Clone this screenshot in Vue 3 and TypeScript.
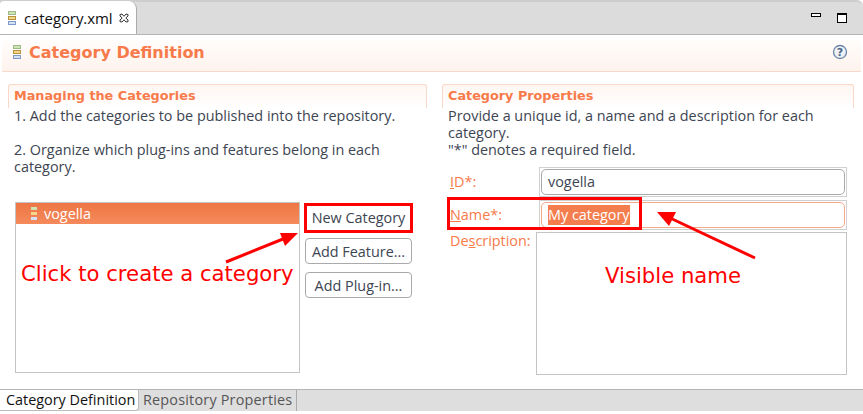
<script setup lang="ts">
const steps = ['1. Add the categories to be published into the repository.', '2. Organize which plug-ins and features belong in each category.']
</script>

<template>
  <div class="page">
    <div class="tabbar">
      <div class="tab">
        <svg class="cat" width="10" height="14" viewBox="0 0 10 14"><rect x="1.5" y="0.5" width="7" height="3" fill="#cfe3b5" stroke="#9bb98a"/><rect x="1.5" y="5.5" width="7" height="3" fill="#f3d68c" stroke="#b8923a"/><rect x="1.5" y="10.5" width="7" height="3" fill="#d5e1f3" stroke="#7d9ac9"/></svg>
        <span>category.xml</span>
        <svg class="close" width="10" height="10" viewBox="0 0 10 10"><path d="M1 1.5 3 1 5 3.3 7 1 9 1.5 9 3 6.8 5 9 7 9 8.7 7 9 5 6.8 3 9 1 8.7 1 7 3.2 5 1 3Z" fill="#fff" stroke="#333" stroke-width="1"/></svg>
      </div>
      <div class="winbtns">
        <span class="min"></span>
        <span class="max"></span>
      </div>
    </div>
    <div class="formhead">
      <svg class="cat" width="10" height="14" viewBox="0 0 10 14"><rect x="1.5" y="0.5" width="7" height="3" fill="#cfe3b5" stroke="#9bb98a"/><rect x="1.5" y="5.5" width="7" height="3" fill="#f3d68c" stroke="#b8923a"/><rect x="1.5" y="10.5" width="7" height="3" fill="#d5e1f3" stroke="#7d9ac9"/></svg>
      <h1>Category Definition</h1>
      <svg class="help" width="16" height="16" viewBox="0 0 16 16"><circle cx="8" cy="8" r="6.5" fill="#eef2f7" stroke="#6d84a6" stroke-width="1.3"/><text x="8" y="12" text-anchor="middle" font-size="11" font-weight="700" font-family="DejaVu Sans" fill="#4d6488">?</text></svg>
    </div>
    <div class="body">
      <section class="left">
        <h2>Managing the Categories</h2>
        <p class="first">{{ steps[0] }}</p>
        <p class="second">{{ steps[1] }}</p>
        <div class="listrow">
          <div class="list">
            <div class="selected">
              <svg width="8" height="13" viewBox="0 0 8 13"><rect x="1" y="0" width="6" height="3" fill="#cfe3b5"/><rect x="1" y="5" width="6" height="3" fill="#f3d68c"/><rect x="1" y="10" width="6" height="3" fill="#d5e1f3"/></svg>
              <span>vogella</span>
            </div>
          </div>
          <div class="buttons">
            <button class="new">New Category</button>
            <button>Add Feature...</button>
            <button>Add Plug-in...</button>
          </div>
        </div>
      </section>
      <section class="right">
        <h2>Category Properties</h2>
        <p class="intro">Provide a unique id, a name and a description for each category.<br>"*" denotes a required field.</p>
        <div class="fields">
          <label><u>I</u>D*:</label>
          <div class="wrap"><div class="input">vogella</div></div>
          <label><u>N</u>ame*:</label>
          <div class="wrap"><div class="input active"><span class="sel">My category</span></div></div>
          <label class="dlabel">De<u>s</u>cription:</label>
          <div class="desc"></div>
        </div>
      </section>
    </div>
    <div class="bottom">
      <div class="btab on">Category Definition</div>
      <div class="btab">Repository Properties</div>
    </div>

    <div class="note n1">Click to create a category</div>
    <div class="note n2">Visible name</div>
    <div class="redbox b1"></div>
    <div class="redbox b2"></div>
    <svg class="arrows" width="863" height="414" viewBox="0 0 863 414">
      <path d="M226 262 288 237" stroke="#f00" stroke-width="3" fill="none"/>
      <path d="M298 233 280 233 285 246Z" fill="#f00"/>
      <path d="M755 258 668 217" stroke="#f00" stroke-width="3" fill="none"/>
      <path d="M657 212 676 212 669 226Z" fill="#f00"/>
    </svg>
  </div>
</template>

<style scoped>
.page { position: relative; width: 863px; height: 414px; overflow: hidden; background: #fff; font-family: "Open Sans", "Noto Sans", sans-serif; font-size: 14.4px; color: #3d4552; display: flex; flex-direction: column; }
.tabbar { height: 35px; box-sizing: border-box; background: #dcdcdc; border-top: 2px solid #cdcdcd; border-bottom: 1px solid #b5b5b5; border-top-right-radius: 6px; display: flex; justify-content: space-between; }
.tab { width: 137px; height: 33px; margin-top: -1px; box-sizing: border-box; background: #fff; border-right: 1px solid #aaa; border-top-right-radius: 8px; border-top-left-radius: 4px; display: flex; align-items: center; padding: 0 0 0 7px; gap: 7px; color: #111; font-size: 15px; letter-spacing: -0.1px; }
.close { margin-left: 0; }
.winbtns { display: flex; gap: 16px; padding: 11px 16px 0 0; align-items: flex-start; }
.min { width: 8px; height: 2px; border: 1px solid #000; background: #fff; }
.max { width: 8px; height: 7px; border: 1px solid #000; border-top-width: 2px; background: #fff; }
.formhead { height: 37px; box-sizing: border-box; margin: 0 2px; padding: 0 0 2px 10px; display: flex; align-items: center; gap: 7px; background: linear-gradient(#fff, #fff2ec); border-bottom: 1px solid #f7d9cc; }
.formhead h1 { margin: 0; font: 700 16px "DejaVu Sans", sans-serif; color: #f77a4a; flex: 1; }
.help { margin-right: 13px; }
.body { flex: 1; min-height: 0; display: flex; padding: 12px 9px 0 8px; gap: 15px; }
section { position: relative; }
.left { width: 419px; }
.right { width: 412px; }
section::before { content: ""; position: absolute; left: 0; right: 0; top: 0; height: 24px; box-sizing: border-box; border: 1px solid #f8d8c8; border-bottom: 0; border-radius: 3px 3px 0 0; background: linear-gradient(#fff6f2, #fff); }
h2 { position: relative; margin: 0; padding: 3px 6px 0; height: 23px; box-sizing: border-box; font: 700 12.8px/17px "DejaVu Sans", sans-serif; color: #f77a4a; }
p { position: relative; margin: 0; padding-left: 6px; line-height: 17px; font-size: 14.4px; }
.second { margin-top: 17px; width: 395px; }
.listrow { display: flex; margin: 27px 0 0 7px; gap: 5px; }
.list { width: 285px; height: 171px; box-sizing: border-box; border: 1px solid #c4c4c4; }
.selected { height: 21px; background: linear-gradient(#ee7544, #f58a5c); color: #fff; display: flex; align-items: center; gap: 6px; padding: 0 0 1px 14px; box-sizing: border-box; }
.buttons { display: flex; flex-direction: column; gap: 8px; padding-top: 2px; width: 107px; }
button { height: 26px; padding: 0; box-sizing: border-box; border: 1px solid #aaa; border-radius: 4px; background: #fff; font: 14.4px "Open Sans", sans-serif; color: #3d4552; }
.new { border-color: transparent; }
.intro { height: 52px; width: 405px; }
.fields { position: relative; display: grid; grid-template-columns: 88px 311px; margin: 8px 0 0 6px; row-gap: 3px; }
label { color: #f77a4a; display: block; height: 30px; line-height: 30px; padding-left: 2px; white-space: pre; }
.wrap { box-sizing: border-box; height: 30px; margin-left: 3px; border: 1px solid #d0d0d0; padding: 1px; }
.input { height: 26px; box-sizing: border-box; border: 1px solid #aaa; border-radius: 5px; padding-left: 6px; line-height: 23px; }
.active { border-color: #f3a98a; }
.sel { background: #f47d4e; color: #fff; display: inline-block; line-height: 20px; margin-top: 2px; }
.dlabel { line-height: 20px; height: 20px; margin-top: -2px; }
.desc { height: 143px; margin-top: -1px; box-sizing: border-box; border: 1px solid #c4c4c4; width: 311px; }
.bottom { height: 21px; margin-bottom: 3px; background: #dedede; border-top: 1px solid #b5b5b5; display: flex; }
.btab { padding: 0 4px; line-height: 19px; height: 21px; box-sizing: border-box; font-size: 14.4px; letter-spacing: 0.2px; color: #555; border-right: 1px solid #aaa; }
.btab.on { color: #111; letter-spacing: 0; background: #fff; padding: 0 2px 0 6px; border-radius: 0 0 4px 0; border-right: 1px solid #bbb; width: 139px; border-bottom: 1px solid #bbb; }
.note { position: absolute; color: #f00; font: 21.2px "DejaVu Sans", sans-serif; white-space: nowrap; }
.n1 { left: 21px; top: 261px; }
.n2 { left: 605px; top: 263px; }
.redbox { position: absolute; border: 3px solid #f00; box-sizing: border-box; }
.b1 { left: 304px; top: 203px; width: 109px; height: 30px; }
.b2 { left: 447px; top: 197px; width: 195px; height: 33px; }
.arrows { position: absolute; left: 0; top: 0; pointer-events: none; }
</style>
